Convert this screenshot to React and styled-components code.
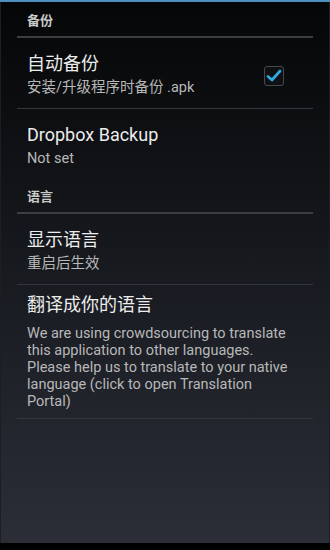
import React from 'react';
import styled, { createGlobalStyle } from 'styled-components';

const GlobalStyle = createGlobalStyle`
  html, body {
    margin: 0;
    padding: 0;
    background: #000;
  }
  * {
    box-sizing: border-box;
  }
`;

const Screen = styled.div`
  width: 330px;
  height: 550px;
  display: flex;
  flex-direction: column;
  overflow: hidden;
  font-family: Roboto, "Noto Sans CJK SC", sans-serif;
  background: #000;
`;

const TopLine = styled.div`
  height: 2px;
  background: #4f8fbf;
  flex-shrink: 0;
`;

const Content = styled.div`
  flex: 1;
  padding: 0 16px;
  background: linear-gradient(180deg, #050607 0%, #0e1013 25%, #1b1e24 60%, #2b2e37 100%);
  border-left: 1px solid #1c1e22;
  border-right: 1px solid #1c1e22;
`;

const BottomBar = styled.div`
  height: 7px;
  background: #000;
  flex-shrink: 0;
`;

const Category = styled.div`
  padding: ${(p) => p.$top}px 10px 6px;
  font-size: 13px;
  line-height: 18px;
  font-weight: bold;
  color: #c9c9c9;
  border-bottom: 2px solid #3c3e42;
`;

const Item = styled.div`
  display: flex;
  align-items: center;
  padding: ${(p) => (p.$tall ? '8px 10px 8px' : '14px 10px 8px')};
  border-bottom: ${(p) => (p.$divider ? '1px solid #33363c' : 'none')};
`;

const Texts = styled.div`
  flex: 1;
  min-width: 0;
`;

const Title = styled.div`
  font-size: 18px;
  line-height: 24px;
  color: #ececec;
`;

const Summary = styled.div`
  font-size: 14.5px;
  line-height: ${(p) => (p.$multi ? '17px' : '24px')};
  margin-top: ${(p) => (p.$multi ? '8px' : '0')};
  padding-right: ${(p) => (p.$multi ? '10px' : '0')};
  color: #b8b8b8;
`;

const CheckBox = styled.div`
  width: 20px;
  height: 20px;
  margin-right: 19px;
  border: 1px solid #45484e;
  border-radius: 3px;
  background: #0f1012;
  display: flex;
  align-items: center;
  justify-content: center;
  flex-shrink: 0;
`;

function Check() {
  return (
    <CheckBox>
      <svg width="16" height="14" viewBox="0 0 16 14">
        <path d="M2 7.5 L6 11 L14 2" fill="none" stroke="#2ea8df" strokeWidth="2.8" strokeLinecap="round" strokeLinejoin="round" />
      </svg>
    </CheckBox>
  );
}

export default function App() {
  return (
    <>
      <GlobalStyle />
      <Screen>
        <TopLine />
        <Content>
          <Category $top={10}>备份</Category>
          <Item $divider>
            <Texts>
              <Title>自动备份</Title>
              <Summary>安装/升级程序时备份 .apk</Summary>
            </Texts>
            <Check />
          </Item>
          <Item>
            <Texts>
              <Title>Dropbox Backup</Title>
              <Summary>Not set</Summary>
            </Texts>
          </Item>
          <Category $top={9}>语言</Category>
          <Item $divider>
            <Texts>
              <Title>显示语言</Title>
              <Summary>重启后生效</Summary>
            </Texts>
          </Item>
          <Item $divider $tall>
            <Texts>
              <Title>翻译成你的语言</Title>
              <Summary $multi>
                We are using crowdsourcing to translate this application to other languages. Please help us to translate to your native language (click to open Translation Portal)
              </Summary>
            </Texts>
          </Item>
        </Content>
        <BottomBar />
      </Screen>
    </>
  );
}
